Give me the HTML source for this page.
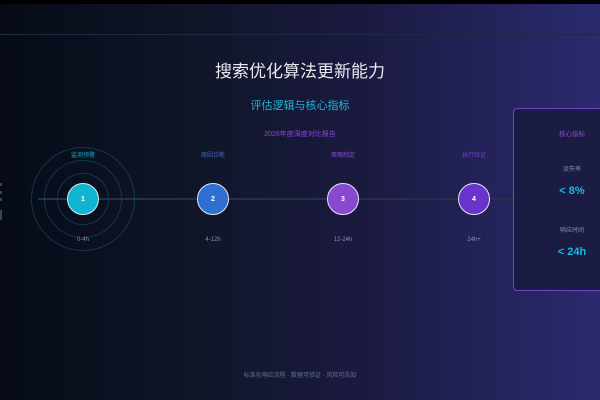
<!DOCTYPE html>
<html><head><meta charset="utf-8"><style>
*{margin:0;padding:0;box-sizing:border-box}
body{width:600px;height:400px;overflow:hidden;position:relative;font-family:"Liberation Sans","Noto Sans CJK SC",sans-serif;background:linear-gradient(90deg,#060b17 0%,#0f1526 30%,#1a1a40 60%,#2b2a6f 100%)}
.abs{position:absolute}
.c{position:absolute;text-align:center;white-space:nowrap;transform:translateX(-50%)}
.node{position:absolute;width:32px;height:32px;border-radius:50%;border:1.5px solid #e6e6f0;color:#fff;font-size:7px;font-weight:bold;display:flex;align-items:center;justify-content:center;transform:translate(-50%,-50%)}
.ring{position:absolute;border-radius:50%;border:1px solid rgba(20,90,120,0.55);transform:translate(-50%,-50%)}
.lbl{font-size:6px;top:150px}
.tm{font-size:6px;color:#8a90a8;top:237px}
</style></head><body>
<div class="abs" style="left:0;top:0;width:600px;height:4px;background:#000"></div>
<div class="abs" style="left:0;top:34px;width:600px;height:1px;background:#1e2a44"></div>
<div class="c" style="left:300px;top:57px;font-size:17px;color:#e8e8f0">搜索优化算法更新能力</div>
<div class="c" style="left:300px;top:97px;font-size:11px;color:#1fb6d8">评估逻辑与核心指标</div>
<div class="c" style="left:300px;top:129px;font-size:7px;color:#8b45d8">2026年度深度对比报告</div>
<div class="abs" style="left:38px;top:198px;width:524px;height:2px;background:#262e48"></div>
<div class="ring" style="left:83px;top:199px;width:104px;height:104px"></div>
<div class="ring" style="left:83px;top:199px;width:78px;height:78px"></div>
<div class="ring" style="left:83px;top:199px;width:52px;height:52px"></div>
<div class="node" style="left:83px;top:199px;background:#0fb4d2">1</div>
<div class="node" style="left:213px;top:199px;background:#2f6fd0">2</div>
<div class="node" style="left:343px;top:199px;background:#8a48d0">3</div>
<div class="node" style="left:474px;top:199px;background:#6a34cc">4</div>
<div class="c lbl" style="left:83px;color:#1aa8c8">监测预警</div>
<div class="c lbl" style="left:213px;color:#3a6ec8">原因诊断</div>
<div class="c lbl" style="left:343px;color:#8a48d0">策略制定</div>
<div class="c lbl" style="left:474px;color:#7a40d0">执行验证</div>
<div class="c tm" style="left:83px">0-4h</div>
<div class="c tm" style="left:213px">4-12h</div>
<div class="c tm" style="left:343px">12-24h</div>
<div class="c tm" style="left:474px">24h+</div>
<div class="abs" style="left:513px;top:108px;width:100px;height:183px;border:1px solid #6a48c8;border-radius:4px;background:#1a1c44"></div>
<div class="c" style="left:572px;top:128px;font-size:6.5px;color:#8a48d0">核心指标</div>
<div class="c" style="left:572px;top:164px;font-size:6px;color:#8a90a8">流失率</div>
<div class="c" style="left:572px;top:185px;font-size:11px;font-weight:bold;color:#1ab8e0">&lt; 8%</div>
<div class="c" style="left:572px;top:225px;font-size:6px;color:#8a90a8">响应时间</div>
<div class="c" style="left:572px;top:246px;font-size:11px;font-weight:bold;color:#1ab8e0">&lt; 24h</div>
<div class="abs" style="left:0;top:183px;width:2px;height:3px;background:#3a4258"></div>
<div class="abs" style="left:0;top:191px;width:2px;height:3px;background:#3a4258"></div>
<div class="abs" style="left:0;top:198px;width:2px;height:3px;background:#3a4258"></div>
<div class="abs" style="left:0;top:210px;width:2px;height:10px;background:#3a4258"></div>
<div class="c" style="left:300px;top:370px;font-size:6px;color:#6a7090">标准化响应流程 · 数据可验证 · 风险可告知</div>
</body></html>
